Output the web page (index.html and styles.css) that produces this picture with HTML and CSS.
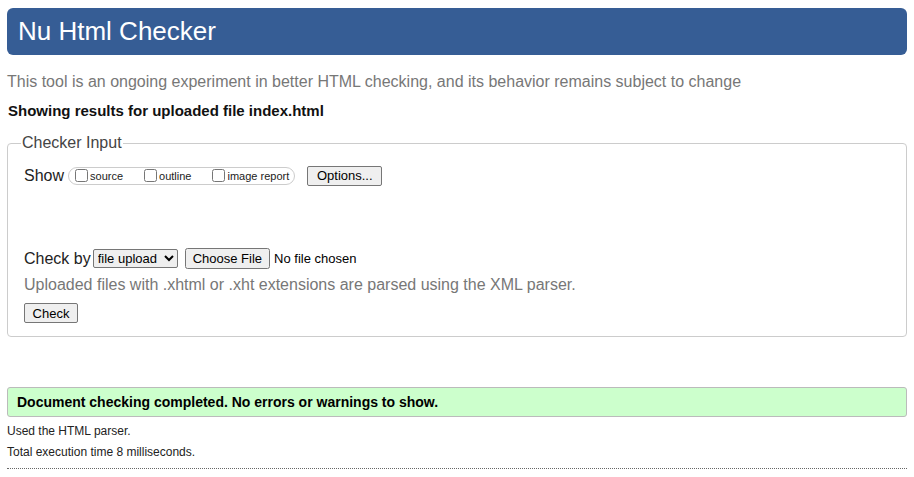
FILE: index.html
```html
<!DOCTYPE html>
<html>
<head>
<meta charset="utf-8">
<title>Nu Html Checker</title>
<link rel="stylesheet" href="styles.css">
</head>
<body>
<div class="page">
  <h1 class="banner">Nu Html Checker</h1>
  <p class="intro">This tool is an ongoing experiment in better HTML checking, and its behavior remains subject to change</p>
  <p class="showing">Showing results for uploaded file index.html</p>
  <fieldset class="input">
    <legend class="legend">Checker Input</legend>
    <div class="show-row">
      <span class="lbl">Show</span>
      <span class="pill">
        <label class="opt"><input type="checkbox">source</label>
        <label class="opt"><input type="checkbox">outline</label>
        <label class="opt"><input type="checkbox">image report</label>
      </span>
      <button class="btn btn-options" type="button">Options...</button>
    </div>
    <div class="spacer"></div>
    <div class="check-row">
      <span class="lbl">Check by</span>
      <select class="sel"><option>file upload</option></select>
      <input class="file" type="file">
    </div>
    <p class="hint">Uploaded files with .xhtml or .xht extensions are parsed using the XML parser.</p>
    <button class="btn btn-check" type="button">Check</button>
  </fieldset>
  <div class="success">Document checking completed. No errors or warnings to show.</div>
  <p class="meta meta-first">Used the HTML parser.</p>
  <p class="meta">Total execution time 8 milliseconds.</p>
  <hr class="rule">
</div>
</body>
</html>
```
FILE: styles.css
```css
html, body {
  margin: 0;
  padding: 0;
  background: #fff;
}
body {
  font-family: "Liberation Sans", Arial, sans-serif;
  color: #000;
}
.page {
  padding: 8px 7px 0 7px;
}
.banner {
  margin: 0;
  height: 47px;
  box-sizing: border-box;
  background: #365d95;
  color: #fff;
  border-radius: 6px;
  font-weight: normal;
  font-size: 26px;
  line-height: 47px;
  padding-left: 11px;
}
.intro {
  margin: 17px 0 0 0;
  font-size: 16px;
  line-height: 19px;
  color: #777;
}
.showing {
  margin: 11px 0 0 1px;
  font-size: 15px;
  line-height: 18px;
  font-weight: bold;
  color: #111;
}
.input {
  margin: 14px 0 0 0;
  border: 1px solid #ccc;
  border-radius: 4px;
  padding: 14px 16px 13px 16px;
  min-width: 0;
}
.legend {
  font-size: 16px;
  color: #444;
  padding: 0 1px;
  margin-left: -3px;
}
.show-row {
  display: flex;
  align-items: center;
  height: 19px;
}
.lbl {
  font-size: 16px;
  color: #222;
}
.pill {
  display: inline-flex;
  align-items: center;
  height: 18px;
  box-sizing: border-box;
  border: 1px solid #ccc;
  border-radius: 9px;
  padding: 0 5px 0 3px;
  margin-left: 4px;
  gap: 18px;
}
.opt {
  display: inline-flex;
  align-items: center;
  font-size: 11px;
  color: #222;
}
.opt input {
  margin: 0 2px 0 3px;
  width: 13px;
  height: 13px;
}
.btn {
  font-family: "Liberation Sans", Arial, sans-serif;
  font-size: 13px;
  color: #000;
  background: #efefef;
  border: 1px solid #767676;
  border-radius: 2px;
  padding: 0 6px;
  height: 20px;
}
.btn-options {
  margin-left: 12px;
  width: 75px;
}
.spacer {
  height: 64px;
}
.check-row {
  display: flex;
  align-items: center;
  height: 19px;
}
.sel {
  font-family: "Liberation Sans", Arial, sans-serif;
  font-size: 13px;
  margin-left: 2px;
  height: 19px;
  width: 85px;
  border: 1px solid #767676;
  border-radius: 2px;
  padding: 0;
}
.file {
  font-family: "Liberation Sans", Arial, sans-serif;
  font-size: 13px;
  margin-left: 7px;
}
.hint {
  margin: 8px 0 0 0;
  font-size: 16px;
  line-height: 18px;
  color: #777;
}
.btn-check {
  margin-top: 9px;
  width: 54px;
  padding: 0;
}
.success {
  margin-top: 50px;
  height: 30px;
  box-sizing: border-box;
  background: #ccffcc;
  border: 1px solid #bbb;
  border-radius: 3px;
  padding-left: 9px;
  font-size: 14px;
  font-weight: bold;
  line-height: 28px;
}
.meta {
  margin: 6px 0 0 0;
  font-size: 12px;
  line-height: 15px;
  color: #222;
}
.meta-first {
  margin-top: 7px;
}
.rule {
  margin: 8px 0 0 0;
  border: 0;
  border-top: 1px dotted #666;
  height: 0;
}
```
